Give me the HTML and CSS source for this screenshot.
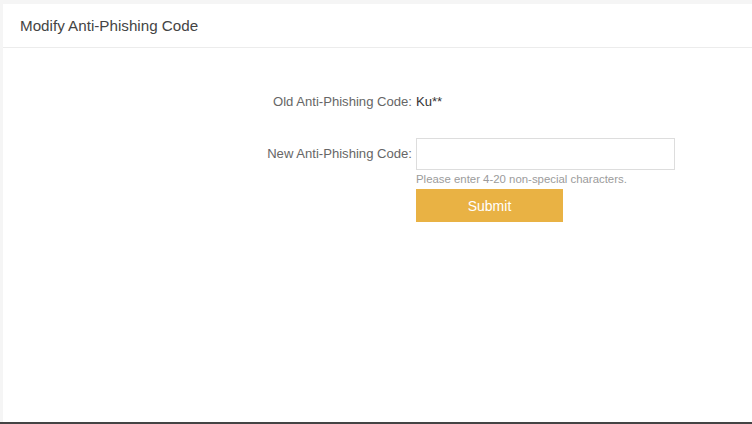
FILE: index.html
```html
<!DOCTYPE html>
<html lang="en">
<head>
<meta charset="utf-8">
<title>Modify Anti-Phishing Code</title>
<link rel="stylesheet" href="styles.css">
</head>
<body>
<div class="page">
  <div class="card">
    <div class="card-header">Modify Anti-Phishing Code</div>
    <div class="card-body">
      <form class="form">
        <div class="row">
          <div class="label">Old Anti-Phishing Code:</div>
          <div class="value">Ku**</div>
        </div>
        <div class="row row-new">
          <label class="label label-new" for="newcode">New Anti-Phishing Code:</label>
          <div class="field">
            <input id="newcode" class="input" type="text">
            <div class="hint">Please enter 4-20 non-special characters.</div>
            <button type="button" class="submit">Submit</button>
          </div>
        </div>
      </form>
    </div>
  </div>
  <div class="bottom-bar"></div>
</div>
</body>
</html>
```
FILE: styles.css
```css
html, body {
  margin: 0;
  padding: 0;
}
body {
  background: #f5f5f5;
  font-family: "Liberation Sans", Arial, sans-serif;
  color: #333;
}
.page {
  height: 424px;
  display: flex;
  flex-direction: column;
  padding-top: 4px;
  padding-left: 3px;
  box-sizing: border-box;
}
.card {
  flex: 1;
  background: #fff;
  display: flex;
  flex-direction: column;
}
.bottom-bar {
  height: 2px;
  background: #444;
  margin-left: -3px;
}
.card-header {
  height: 43px;
  border-bottom: 1px solid #ececec;
  display: flex;
  align-items: center;
  padding-left: 17px;
  font-size: 15.2px;
  color: #444;
}
.card-body {
  flex: 1;
}
.form {
  display: flex;
  flex-direction: column;
  margin: 0;
  padding-top: 46px;
  font-size: 13.1px;
}
.row {
  display: flex;
  align-items: flex-start;
  gap: 4px;
}
.row-new {
  margin-top: 28px;
}
.label {
  width: 409px;
  flex: none;
  text-align: right;
  color: #666;
  line-height: 16px;
}
.value {
  color: #333;
  line-height: 16px;
}
.label-new {
  padding-top: 8px;
}
.field {
  display: flex;
  flex-direction: column;
  align-items: flex-start;
}
.input {
  width: 259px;
  height: 32px;
  box-sizing: border-box;
  border: 1px solid #ddd;
  margin: 0;
  padding: 0 8px;
  font: inherit;
  outline: none;
}
.hint {
  margin-top: 2px;
  font-size: 11.4px;
  line-height: 14px;
  color: #9b9b9b;
}
.submit {
  margin-top: 3px;
  width: 147px;
  height: 33px;
  border: none;
  background: #e9b244;
  color: #fff;
  font-family: inherit;
  font-size: 14px;
  padding: 0;
  cursor: pointer;
}
```
